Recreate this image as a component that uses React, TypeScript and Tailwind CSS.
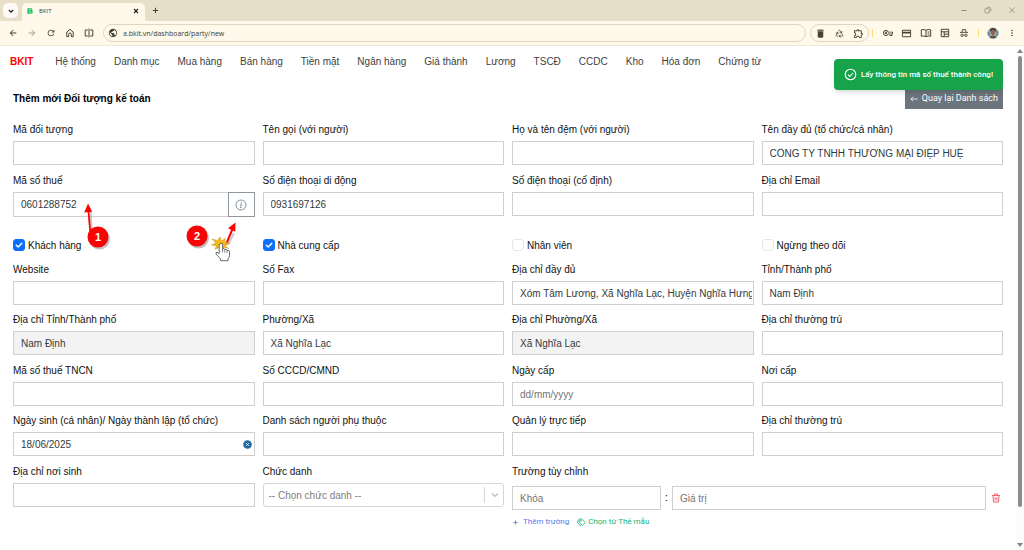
import { useState, type ReactNode } from 'react';
import { clsx } from 'clsx';
import { LuRecycle } from 'react-icons/lu';
import { MdArrowBack, MdArrowForward, MdDelete, MdMoreVert, MdOutlineCreditCard, MdOutlineExtension, MdOutlineVpnKey, MdPublic, MdRefresh } from 'react-icons/md';

const MENU = ['Hệ thống', 'Danh mục', 'Mua hàng', 'Bán hàng', 'Tiền mặt', 'Ngân hàng', 'Giá thành', 'Lương', 'TSCĐ', 'CCDC', 'Kho', 'Hóa đơn', 'Chứng từ'];

const inputClass = 'block w-full min-w-0 border border-[#cfcfcf] bg-white pr-px pl-[7px] text-[10px] text-[#333a40] outline-none placeholder:text-[#757575] read-only:bg-[#f3f3f3]';

type FieldProps = {
  id: string;
  label: string;
  value?: string;
  placeholder?: string;
  readOnly?: boolean;
};

function Field({ id, label, children }: { id: string; label: string; children: ReactNode }) {
  return (
    <div className="flex min-w-0 flex-col gap-1">
      <label htmlFor={id} className="h-3.5 text-[10px] leading-[14px] whitespace-nowrap text-[#111]">{label}</label>
      {children}
    </div>
  );
}

function TextField({ id, label, value, placeholder, readOnly }: FieldProps) {
  return (
    <Field id={id} label={label}>
      <input id={id} type="text" className={clsx(inputClass, 'h-6')} defaultValue={value} placeholder={placeholder} readOnly={readOnly} />
    </Field>
  );
}

function CheckField({ id, label, checked = false }: { id: string; label: string; checked?: boolean }) {
  const [on, setOn] = useState(checked);
  return (
    <div className="flex h-3 items-start gap-[3px]">
      <span className="relative size-3">
        <input
          id={id}
          type="checkbox"
          checked={on}
          onChange={e => setOn(e.target.checked)}
          className="block size-3 appearance-none rounded-[3px] border border-[#e6e6e6] bg-white checked:border-[#0d6efd] checked:bg-[#0d6efd]"
        />
        {on && (
          <svg viewBox="0 0 12 12" className="pointer-events-none absolute inset-0 size-3" fill="none" stroke="#fff" strokeWidth="1.5" strokeLinecap="round" strokeLinejoin="round">
            <path d="M3.3 6.2 5.2 8 8.8 4.3" />
          </svg>
        )}
      </span>
      <label htmlFor={id} className="text-[10px] leading-[14px] text-[#111]">{label}</label>
    </div>
  );
}

function Row({ children }: { children: ReactNode }) {
  return <div className="grid grid-cols-4 gap-2">{children}</div>;
}

function ToolButton({ label, children, dim }: { label: string; children: ReactNode; dim?: boolean }) {
  return (
    <button type="button" aria-label={label} className={clsx('flex w-[19px] justify-center', dim ? 'text-[#a9a38f]' : 'text-[#474331]')}>
      {children}
    </button>
  );
}

function BrowserBar() {
  return (
    <header className="shrink-0">
      <div className="flex h-[21px] items-start bg-[#e8dfc8] pl-[3px]">
        <button type="button" aria-label="Search tabs" className="mt-[3px] flex size-[15px] items-center justify-center rounded-[5px] bg-[#fffaf7]">
          <svg viewBox="0 0 8 8" className="size-2" fill="none" stroke="#222" strokeWidth="1.3"><path d="M1.8 3 4 5.2 6.2 3" /></svg>
        </button>
        <div className="mt-[3px] ml-[4px] flex h-[18px] w-[123px] items-center rounded-t-[5px] bg-[#fff9ec] px-[5px] pb-[2px]">
          <svg viewBox="0 0 6 6" className="size-[6px]" fill="none" stroke="#13c05b" strokeWidth="1.3"><path d="M1 .8h2.8q1 0 1 1.1T3.8 3H1m0 0h3q1.2 0 1.2 1.1T4 5.2H1zM1.1.2v5.6" /></svg>
          <span className="ml-[6px] flex-1 font-['Open_Sans',sans-serif] text-[6px] leading-3 text-[#3a3a30]">BKIT</span>
          <button type="button" aria-label="Close tab">
            <svg viewBox="0 0 8 8" className="size-2" stroke="#222" strokeWidth="1.1"><path d="m2 2 4 4M6 2 2 6" /></svg>
          </button>
        </div>
        <button type="button" aria-label="New tab" className="mt-[6px] ml-[6px]">
          <svg viewBox="0 0 9 9" className="size-[9px]" stroke="#444034" strokeWidth="1"><path d="M4.5 1.8v5.4M1.8 4.5h5.4" /></svg>
        </button>
        <div className="mt-[5px] ml-auto flex gap-[14px] pr-[7px] text-[#8f8977]">
          <button type="button" aria-label="Minimize"><svg viewBox="0 0 10 10" className="size-[10px]" stroke="currentColor"><path d="M2.5 5.5h5" /></svg></button>
          <button type="button" aria-label="Restore"><svg viewBox="0 0 10 10" className="size-[10px]" fill="none" stroke="currentColor" strokeWidth=".8"><rect x="2" y="3.7" width="4.3" height="4.3" rx="1" /><path d="M3.7 2.3h2.5q1.6 0 1.6 1.6v2.5" /></svg></button>
          <button type="button" aria-label="Close"><svg viewBox="0 0 10 10" className="size-[10px]" stroke="currentColor" strokeWidth=".8"><path d="m2.2 2.5 5.4 5.4M7.6 2.5 2.2 7.9" /></svg></button>
        </div>
      </div>
      <div className="flex h-[25px] items-center border-b border-[#f0e9d9] bg-[#fff9ec] pl-[3px]">
        <ToolButton label="Back"><MdArrowBack size={10} /></ToolButton>
        <ToolButton label="Forward" dim><MdArrowForward size={10} /></ToolButton>
        <ToolButton label="Reload"><MdRefresh size={10} /></ToolButton>
        <ToolButton label="Home">
          <svg viewBox="0 0 10 10" className="size-[10px]" fill="none" stroke="currentColor" strokeWidth="1"><path d="M1.8 4 5 1.4 8.2 4v4.6H6.3V6.3a1.3 1.3 0 0 0-2.6 0v2.3H1.8z" /></svg>
        </ToolButton>
        <ToolButton label="Split view">
          <svg viewBox="0 0 10 10" className="size-[10px]" fill="none" stroke="currentColor" strokeWidth="1"><path d="M3.8 2H1.2v6h2.6M6.2 2h2.6v6H6.2M5 .5v9" /></svg>
        </ToolButton>
        <div className="ml-[5px] flex h-[18px] flex-1 items-center gap-[5px] rounded-full border border-[#ddd6c3] px-1">
          <MdPublic size={10} className="text-[#474331]" />
          <input type="text" aria-label="Address" defaultValue="a.bkit.vn/dashboard/party/new" className="h-4 min-w-0 flex-1 bg-transparent font-['Open_Sans',sans-serif] text-[7px] text-[#3c3a2e] outline-none" />
        </div>
        <div className="ml-[4px] flex h-[18px] items-center rounded-full border border-[#ddd6c3]">
          <ToolButton label="Clear data"><MdDelete size={11} /></ToolButton>
          <ToolButton label="Recycle"><LuRecycle size={9} /></ToolButton>
          <ToolButton label="Extensions"><MdOutlineExtension size={11} /></ToolButton>
        </div>
        <span className="ml-[3px] h-2 w-px shrink-0 bg-[#ffdc6b]" />
        <div className="ml-[5px] flex items-center">
          <ToolButton label="Passwords"><MdOutlineVpnKey size={10} /></ToolButton>
          <ToolButton label="Payment methods"><MdOutlineCreditCard size={11} /></ToolButton>
          <ToolButton label="Reading mode">
            <svg viewBox="0 0 12 10" className="h-[10px] w-3" fill="none" stroke="currentColor" strokeWidth="1"><path d="M6 2.3Q4 1 1.3 1.8v6.4Q4 7.5 6 8.7q2-1.2 4.7-.5V1.8Q8 1 6 2.3zv6.4M7.6 4h1.8M7.6 6h1.8" /></svg>
          </ToolButton>
          <ToolButton label="Side panel">
            <svg viewBox="0 0 10 10" className="size-[10px]" fill="none" stroke="currentColor" strokeWidth="1"><path d="M1.3 1.3h7.4v7.4H1.3zM1.3 3.8h7.4M4.2 3.8v4.9M4.2 6.2h4.5" /></svg>
          </ToolButton>
          <ToolButton label="Incognito">
            <svg viewBox="0 0 10 10" className="size-[10px]" fill="none" stroke="currentColor" strokeWidth=".9"><path d="M3 4 3.6 1.4 5 1.9l1.4-.5L7 4M1 4.4h8M4.2 7.2q.8-.7 1.6 0" /><circle cx="3" cy="7.3" r="1.2" /><circle cx="7" cy="7.3" r="1.2" /></svg>
          </ToolButton>
        </div>
        <span className="ml-[5px] h-2 w-px shrink-0 bg-[#ffdc6b]" />
        <button type="button" aria-label="Profile" className="ml-[8px]">
          <svg viewBox="0 0 12 12" className="size-3">
            <clipPath id="avatar"><circle cx="6" cy="6" r="5.6" /></clipPath>
            <g clipPath="url(#avatar)">
              <path fill="#a9b5b4" d="M0 0h12v12H0z" />
              <path fill="#6f9398" d="M0 5h3v4H0zm9-1h3v5H9z" />
              <path fill="#3d342e" d="M2.8 4.6Q2.6 1 6 1t3.2 3.4z" />
              <ellipse cx="6" cy="5.4" rx="2.2" ry="2.8" fill="#8f6754" />
              <path fill="#56544d" d="M1.5 12Q2 8.4 6 8.4t4.5 3.6z" />
            </g>
          </svg>
        </button>
        <span className="mx-[3px]"><ToolButton label="Menu"><MdMoreVert size={10} /></ToolButton></span>
      </div>
    </header>
  );
}

function TaxField() {
  return (
    <div className="relative">
      <Field id="tax" label="Mã số thuế">
        <div className="flex h-[25px]">
          <input id="tax" type="text" defaultValue="0601288752" className={inputClass} />
          <button type="button" aria-label="Tra cứu mã số thuế" className="-ml-px flex w-[27px] shrink-0 items-center justify-center border border-[#8f979e] bg-white">
            <svg viewBox="0 0 12 12" className="size-3" fill="none" stroke="#6c757d" strokeWidth=".8"><circle cx="6" cy="6" r="5" /><path d="M6.4 5 5.5 8.7h1M5.4 5h1" /><path d="M6.5 3.1v.8" strokeWidth="1" /></svg>
          </button>
        </div>
      </Field>
      <svg viewBox="0 0 40 52" className="pointer-events-none absolute top-[26px] left-[63px] z-10 h-[52px] w-10">
        <circle cx="23.5" cy="39" r="10.5" fill="#777" opacity=".45" />
        <path d="M16 35 14.6 12" stroke="#777" strokeOpacity=".4" strokeWidth="2" />
        <path d="M14.5 34 12.3 10" stroke="#f00" strokeWidth="1.8" />
        <path d="m12 3.5 4.2 8.3-8 .6z" fill="#f00" />
        <circle cx="22" cy="37" r="10.5" fill="#f50505" />
        <text x="22" y="41" textAnchor="middle" fill="#fff" fontSize="11" fontWeight="700" fontFamily="'Liberation Sans', sans-serif">1</text>
      </svg>
      <svg viewBox="0 0 60 52" className="pointer-events-none absolute top-[40px] right-[11px] z-10 h-[52px] w-[60px]">
        <circle cx="14.5" cy="24" r="10.5" fill="#777" opacity=".45" />
        <circle cx="13" cy="22" r="10.5" fill="#f50505" />
        <text x="13" y="26" textAnchor="middle" fill="#fff" fontSize="11" fontWeight="700" fontFamily="'Liberation Sans', sans-serif">2</text>
        <path d="m44 31 6-12" stroke="#777" strokeOpacity=".4" strokeWidth="2" />
        <path d="M42 30.5 48.5 15" stroke="#f00" strokeWidth="2" />
        <path d="m51.500 8.500-.2 9.200-7.300-3.400z" fill="#f00" />
        <path d="m36 23 1.500 4 4-2.800-1.200 4 5.200.4-4.500 2.400 3.500 3.600-5-1.400-1.500 3.500-2.500-3.500-4.500 2.200 1.500-3.600-5.200-.7 4.700-2.300-4-3.800 5.300 1.500z" fill="#f4b81c" stroke="#b98608" strokeWidth=".4" />
        <path d="M37 29.500q1.600-.8 1.600 1v4.300q2-.8 2.200.7 2-.7 2.200.9 2.500-.6 2.500 1.300v3.700q0 2-1.500 3.500v1.800h-7.300l-.5-2.100-4-4.500q-1-2 1-1.700l2 1.200v-8.500q0-1.200 1.800-1.600z" fill="#fff" stroke="#444" strokeWidth=".8" />
        <path d="M38.600 35v3.500M40.800 35.700v3M43 36.500v2.500" stroke="#555" strokeWidth=".7" />
      </svg>
    </div>
  );
}

function CustomFields() {
  return (
    <fieldset className="col-span-2 min-w-0">
      <legend className="h-3.5 text-[10px] leading-[14px] text-[#111]">Trường tùy chỉnh</legend>
      <div className="mt-[7px] flex items-center">
        <input aria-label="Khóa" type="text" placeholder="Khóa" className={clsx(inputClass, 'h-6 flex-[139]')} />
        <span className="w-[11px] text-center text-[10px] leading-3">:</span>
        <input aria-label="Giá trị" type="text" placeholder="Giá trị" className={clsx(inputClass, 'h-6 flex-[304]')} />
        <button type="button" aria-label="Xóa trường" className="flex w-[17px] shrink-0 justify-center pl-[3px]">
          <svg viewBox="0 0 10 10" className="size-[10px]" fill="none" stroke="#ef5560" strokeWidth=".9"><path d="M1 2.500h8M3.500 2.300V1h3v1.300M2 2.700l.5 6.400h5L8 2.700M4.100 4.200v3.300M5.900 4.200v3.300" /></svg>
        </button>
      </div>
      <div className="mt-[6px] flex gap-2 font-[Roboto,sans-serif] text-[8px] leading-3">
        <button type="button" className="flex items-center gap-1 text-[#4f7df0]">
          <svg viewBox="0 0 7 7" className="size-[7px]" stroke="currentColor" strokeWidth=".8"><path d="M3.500 1.300v4.400M1.300 3.500h4.400" /></svg>
          Thêm trường
        </button>
        <button type="button" className="flex items-center gap-[2px] text-[#12b478]">
          <svg viewBox="0 0 10 10" className="size-[9px]" fill="none" stroke="currentColor" strokeWidth=".9" strokeLinejoin="round"><path d="M2.400 1.200 5.300 1 9.300 5 6.100 8.300 2.200 4.500zM1.600 2.300.8 3v2.600l3.900 3.700" /><circle cx="4.200" cy="2.900" r=".6" /></svg>
          Chọn từ Thẻ mẫu
        </button>
      </div>
    </fieldset>
  );
}

function PartyForm() {
  return (
    <form className="mt-[14px] flex flex-col gap-[9px] pb-5" onSubmit={e => e.preventDefault()}>
      <Row>
        <TextField id="code" label="Mã đối tượng" />
        <TextField id="first-name" label="Tên gọi (với người)" />
        <TextField id="last-name" label="Họ và tên đệm (với người)" />
        <TextField id="full-name" label="Tên đầy đủ (tổ chức/cá nhân)" value="CÔNG TY TNHH THƯƠNG MẠI ĐIỆP HUỆ" />
      </Row>
      <Row>
        <TaxField />
        <TextField id="mobile" label="Số điện thoại di động" value="0931697126" />
        <TextField id="phone" label="Số điện thoại (cố định)" />
        <TextField id="email" label="Địa chỉ Email" />
      </Row>
      <div className="pt-[13px] pb-[3px]">
        <Row>
          <CheckField id="is-customer" label="Khách hàng" checked />
          <CheckField id="is-supplier" label="Nhà cung cấp" checked />
          <CheckField id="is-employee" label="Nhân viên" />
          <CheckField id="inactive" label="Ngừng theo dõi" />
        </Row>
      </div>
      <Row>
        <TextField id="website" label="Website" />
        <TextField id="fax" label="Số Fax" />
        <TextField id="address-full" label="Địa chỉ đầy đủ" value="Xóm Tâm Lương, Xã Nghĩa Lạc, Huyện Nghĩa Hưng, Tỉnh Nam Định" />
        <TextField id="province" label="Tỉnh/Thành phố" value="Nam Định" />
        <TextField id="province-address" label="Địa chỉ Tỉnh/Thành phố" value="Nam Định" readOnly />
        <TextField id="ward" label="Phường/Xã" value="Xã Nghĩa Lạc" />
        <TextField id="ward-address" label="Địa chỉ Phường/Xã" value="Xã Nghĩa Lạc" readOnly />
        <TextField id="residence" label="Địa chỉ thường trú" />
      </Row>
      <Row>
        <TextField id="personal-tax" label="Mã số thuế TNCN" />
        <TextField id="citizen-id" label="Số CCCD/CMND" />
        <TextField id="issued-on" label="Ngày cấp" placeholder="dd/mm/yyyy" />
        <TextField id="issued-at" label="Nơi cấp" />
        <Field id="birthday" label="Ngày sinh (cá nhân)/ Ngày thành lập (tổ chức)">
          <div className="relative">
            <input id="birthday" type="text" defaultValue="18/06/2025" className={clsx(inputClass, 'h-6')} />
            <button type="button" aria-label="Xóa ngày" className="absolute inset-y-0 right-[3px] flex items-center">
              <svg viewBox="0 0 9 9" className="size-[9px]"><circle cx="4.500" cy="4.500" r="4.300" fill="#216ba5" /><path d="m3.200 3.200 2.600 2.600M5.800 3.200 3.200 5.800" stroke="#fff" strokeWidth=".9" /></svg>
            </button>
          </div>
        </Field>
        <TextField id="dependants" label="Danh sách người phụ thuộc" />
        <TextField id="manager" label="Quản lý trực tiếp" />
        <TextField id="residence-2" label="Địa chỉ thường trú" />
      </Row>
      <Row>
        <TextField id="birthplace" label="Địa chỉ nơi sinh" />
        <Field id="title" label="Chức danh">
          <div className="relative">
            <select id="title" className="block h-6 w-full appearance-none rounded-[3px] border border-[#d6d6d6] bg-white px-[5px] text-[10px] text-[#808080] outline-none">
              <option>-- Chọn chức danh --</option>
            </select>
            <span className="pointer-events-none absolute inset-y-1 right-0 flex w-5 items-center justify-center border-l border-[#d6d6d6]">
              <svg viewBox="0 0 10 10" className="size-[10px]" fill="none" stroke="#bbb" strokeWidth="1.200"><path d="m2 3.500 3 3 3-3" /></svg>
            </span>
          </div>
        </Field>
        <CustomFields />
      </Row>
    </form>
  );
}

export default function App() {
  return (
    <div className="flex min-h-screen flex-col bg-white font-['Liberation_Sans',Arial,sans-serif]">
      <BrowserBar />
      <div className="flex flex-1">
        <div className="relative min-w-0 flex-1">
          <nav className="flex h-8 items-center gap-[18px] pl-[10px] text-[10px] leading-3 whitespace-nowrap text-[#3b3f44]">
            <a href="#home" className="mr-[4px] font-bold text-[#f00]">BKIT</a>
            {MENU.map(item => <a key={item} href="#menu">{item}</a>)}
          </nav>
          <main className="px-[13px]">
            <div className="mt-[10px] flex h-[21px] items-end justify-between">
              <h1 className="text-[10px] leading-5 font-bold text-black">Thêm mới Đối tượng kế toán</h1>
              <button type="button" className="flex h-[21px] items-center gap-1 bg-[#6c757d] px-[5px] font-[Roboto,sans-serif] text-[9px] text-white">
                <svg viewBox="0 0 9 9" className="size-2" fill="none" stroke="currentColor" strokeWidth=".9"><path d="M8.500 4.500H1M3.500 2 1 4.500 3.500 7" /></svg>
                Quay lại Danh sách
              </button>
            </div>
            <PartyForm />
          </main>
          <div role="status" className="absolute top-[13px] right-[13px] flex h-[31px] items-center gap-1 rounded-[4px] bg-[#16a34a] px-[10px] font-[Roboto,sans-serif] text-[8px] font-medium text-white shadow-md">
            <svg viewBox="0 0 13 13" className="size-[13px]" fill="none" stroke="currentColor" strokeWidth="1.100"><circle cx="6.500" cy="6.500" r="5.300" /><path d="m4 6.700 1.800 1.800L9 5" /></svg>
            Lấy thông tin mã số thuế thành công!
          </div>
        </div>
        <div aria-hidden="true" className="flex w-2 shrink-0 flex-col items-center bg-[#fcfcfc] py-[3px]">
          <svg viewBox="0 0 6 4" className="h-1 w-[6px]"><path d="M3 0 6 4H0z" fill="#858585" /></svg>
          <span className="mt-[3px] mb-9 w-1 flex-1 rounded-full bg-[#8b8b8b]" />
          <svg viewBox="0 0 6 4" className="h-1 w-[6px]"><path d="M0 0h6L3 4z" fill="#858585" /></svg>
        </div>
      </div>
    </div>
  );
}
